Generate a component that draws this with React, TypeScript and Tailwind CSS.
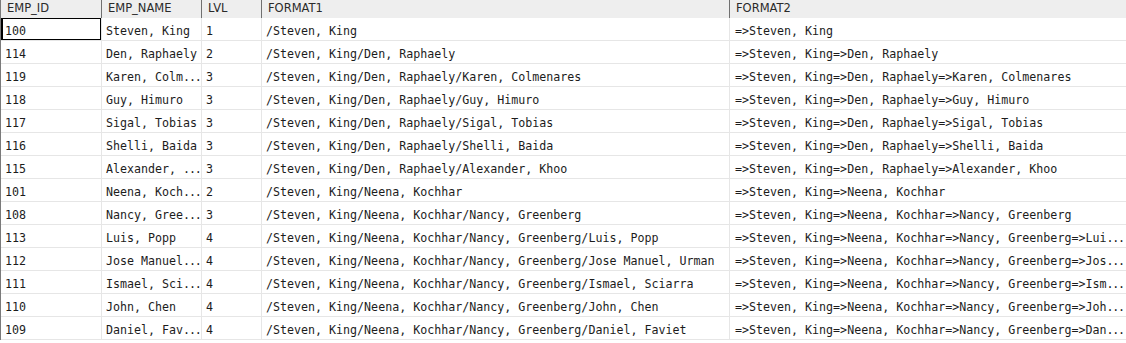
import React from "react";

const rows: [string, string, string, string, string][] = [
  ["100", "Steven, King", "1", "/Steven, King", "=>Steven, King"],
  ["114", "Den, Raphaely", "2", "/Steven, King/Den, Raphaely", "=>Steven, King=>Den, Raphaely"],
  ["119", "Karen, Colm...", "3", "/Steven, King/Den, Raphaely/Karen, Colmenares", "=>Steven, King=>Den, Raphaely=>Karen, Colmenares"],
  ["118", "Guy, Himuro", "3", "/Steven, King/Den, Raphaely/Guy, Himuro", "=>Steven, King=>Den, Raphaely=>Guy, Himuro"],
  ["117", "Sigal, Tobias", "3", "/Steven, King/Den, Raphaely/Sigal, Tobias", "=>Steven, King=>Den, Raphaely=>Sigal, Tobias"],
  ["116", "Shelli, Baida", "3", "/Steven, King/Den, Raphaely/Shelli, Baida", "=>Steven, King=>Den, Raphaely=>Shelli, Baida"],
  ["115", "Alexander, ...", "3", "/Steven, King/Den, Raphaely/Alexander, Khoo", "=>Steven, King=>Den, Raphaely=>Alexander, Khoo"],
  ["101", "Neena, Koch...", "2", "/Steven, King/Neena, Kochhar", "=>Steven, King=>Neena, Kochhar"],
  ["108", "Nancy, Gree...", "3", "/Steven, King/Neena, Kochhar/Nancy, Greenberg", "=>Steven, King=>Neena, Kochhar=>Nancy, Greenberg"],
  ["113", "Luis, Popp", "4", "/Steven, King/Neena, Kochhar/Nancy, Greenberg/Luis, Popp", "=>Steven, King=>Neena, Kochhar=>Nancy, Greenberg=>Lui..."],
  ["112", "Jose Manuel...", "4", "/Steven, King/Neena, Kochhar/Nancy, Greenberg/Jose Manuel, Urman", "=>Steven, King=>Neena, Kochhar=>Nancy, Greenberg=>Jos..."],
  ["111", "Ismael, Sci...", "4", "/Steven, King/Neena, Kochhar/Nancy, Greenberg/Ismael, Sciarra", "=>Steven, King=>Neena, Kochhar=>Nancy, Greenberg=>Ism..."],
  ["110", "John, Chen", "4", "/Steven, King/Neena, Kochhar/Nancy, Greenberg/John, Chen", "=>Steven, King=>Neena, Kochhar=>Nancy, Greenberg=>Joh..."],
  ["109", "Daniel, Fav...", "4", "/Steven, King/Neena, Kochhar/Nancy, Greenberg/Daniel, Faviet", "=>Steven, King=>Neena, Kochhar=>Nancy, Greenberg=>Dan..."],
];

const headers = ["EMP_ID", "EMP_NAME", "LVL", "FORMAT1", "FORMAT2"];

function CellText({ text }: { text: string }) {
  if (text.endsWith("...")) {
    return (
      <span>
        {text.slice(0, -3)}
        <span className="tracking-[-1.2px]">...</span>
      </span>
    );
  }
  return <span>{text}</span>;
}

export default function App() {
  return (
    <div className="w-[1126px] h-[343px] overflow-hidden bg-white">
      <div className="grid grid-cols-[101px_100px_60px_468px_1fr] border-l border-[#7a7a7a]">
        {headers.map((h, i) => (
          <div
            key={h}
            className={`h-[18px] bg-[#eeeeee] flex items-center pl-[6px] text-[11.5px] text-[#2a2a2a] overflow-hidden whitespace-nowrap ${
              i < 4 ? "border-r border-[#707070]" : ""
            }`}
            style={{ fontFamily: '"DejaVu Sans", sans-serif' }}
          >
            {h}
          </div>
        ))}
        {rows.map((r, ri) =>
          r.map((c, ci) => (
            <div
              key={`${ri}-${ci}`}
              className={`relative h-[23px] flex items-center pt-[5px] text-[11.65px] text-[#1c1c1c] overflow-hidden whitespace-nowrap border-b border-[#e6e6e6] ${
                ci < 4 ? "border-r" : ""
              } ${ci === 1 ? "pl-[4px]" : ci === 4 ? "pl-[5px]" : "pl-[4px]"}`}
              style={{ fontFamily: '"DejaVu Sans Mono", monospace' }}
            >
              <CellText text={c} />
              {ri === 0 && ci === 0 && (
                <div className="absolute left-0 right-[-1px] top-[-1px] bottom-[-1px] border-2 border-black" />
              )}
            </div>
          ))
        )}
      </div>
    </div>
  );
}
